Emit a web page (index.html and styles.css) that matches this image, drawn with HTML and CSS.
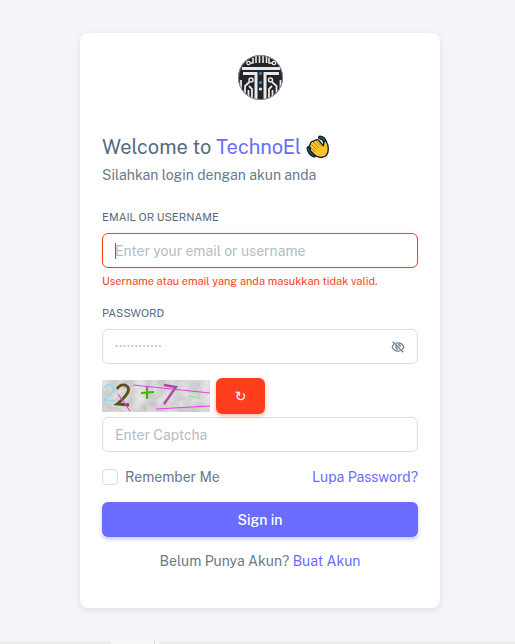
FILE: index.html
```html
<!DOCTYPE html>
<html lang="id">
<head>
<meta charset="utf-8">
<meta name="viewport" content="width=device-width, initial-scale=1">
<title>TechnoEl - Login</title>
<link rel="stylesheet" href="styles.css">
</head>
<body>
<main class="page">
  <section class="card">
    <svg class="logo" viewBox="0 0 45 45" aria-hidden="true">
      <defs><clipPath id="disc"><circle cx="22.5" cy="22.5" r="22.5"/></clipPath></defs>
      <g clip-path="url(#disc)" fill="none" stroke="#e8e9ea">
        <rect width="45" height="45" fill="#222428" stroke="none"/>
        <path stroke-width="1.6" d="M12 8h3V3M18 0v8M21.500 0v8M25 0v8M28.500 0v8M34 8h-3V3"/>
        <circle cx="10.500" cy="8" r="1.700" stroke-width="1.300"/><circle cx="36" cy="8" r="1.700" stroke-width="1.300"/>
        <path stroke-width="3" d="M4 13.500h38"/>
        <path stroke-width="3" d="M5 18.500h13V45M41 18.500H27V45"/>
        <circle cx="13" cy="25" r="2" stroke-width="1.500"/><circle cx="32.500" cy="25" r="2" stroke-width="1.500"/>
        <path stroke-width="1.800" d="M11.500 27L7 31v10M34 27l4.500 4v10M14 45V34l-3-3M31 45V34l3-3M3 25v10M42.500 25v10M10.500 45V35M34.500 45V35"/>
        <g stroke="none"><circle cx="22.500" cy="18.500" r="1.400" fill="#2a91d8"/><circle cx="22.500" cy="27.500" r="1.500" fill="#2a91d8"/><circle cx="22.500" cy="34" r="1.600" fill="#eee"/></g>
      </g>
      <circle cx="22.500" cy="22.500" r="22" fill="none" stroke="#84919d"/>
    </svg>

    <h1 class="title">
      <span>Welcome to <span class="brand">TechnoEl</span></span>
      <svg class="wave" viewBox="0 0 24 24" role="img" aria-label="wave">
        <g fill="none" stroke="#10191c" stroke-width="4" stroke-linecap="round">
          <path d="M14 2.500q4 .500 5 4.500M2.500 13q.500 5 5.500 7.500"/>
          <path d="M14 2.500q4 .500 5 4.500M2.500 13q.500 5 5.500 7.500" stroke="#1d6673" stroke-width="1.500"/>
        </g>
        <path d="M5 7.500q1-1.800 2.700-.800.300-2 2.300-1.500 1.500-1.500 3 .500l4.500 5 .300-3q.500-2 2.500-1.200 2 3 2 7.500 0 8-7.300 8.500-4 0-7-3l-3.500-3.500q-1-1.500.300-2.500l-1-1.500q-1-1.700.700-2.500Q3.800 8.500 5 7.500z" fill="#ffc331" stroke="#10191c" stroke-width="1.300" stroke-linejoin="round"/>
        <path d="M8 7.500l5 5.500M11 6.500l4.500 5M6 10l5 5M6 14l3 3" fill="none" stroke="#a76c12" stroke-width=".8"/>
      </svg>
    </h1>
    <p class="subtitle">Silahkan login dengan akun anda</p>

    <form class="form">
      <label class="label" for="email">Email or Username</label>
      <div class="field">
        <input class="input invalid" id="email" type="text" placeholder="Enter your email or username">
        <span class="caret"></span>
      </div>
      <p class="error">Username atau email yang anda masukkan tidak valid.</p>

      <label class="label" for="password">Password</label>
      <div class="input group">
        <input class="bare" id="password" type="password" placeholder="············">
        <button class="eye" type="button" aria-label="Show password">
          <svg viewBox="0 0 24 24" fill="none" stroke="currentColor" stroke-width="2">
            <path d="M3 3l18 18M8 5.500Q10 5 12 5q7 0 10 7-1 2.500-3 4.300M16 18.500Q14 19 12 19q-7 0-10-7 1-2.500 3-4.500M12 8q4 0 4 4M8.500 10.500Q7.500 15 12 16"/>
          </svg>
        </button>
      </div>

      <div class="captcha">
        <svg class="captcha-image" viewBox="0 0 108 32" role="img" aria-label="Captcha">
          <defs>
            <filter id="paper" x="0" y="0" width="100%" height="100%" color-interpolation-filters="sRGB">
              <feTurbulence type="fractalNoise" baseFrequency=".09" numOctaves="4" seed="4"/>
              <feColorMatrix values=".22 0 0 0 .73 .22 0 0 0 .73 .22 0 0 0 .73 0 0 0 0 1"/>
            </filter>
          </defs>
          <rect width="108" height="32" fill="#d6d6d6"/>
          <rect width="108" height="32" filter="url(#paper)"/>
          <g fill="none">
            <path d="M3 8q2-4 6-3 4 2 2 6-2 4-9 9l11 1" stroke="#a3d3e8" stroke-width="2"/>
            <path d="M15 9q3-5 8-4 5 2 3 7-3 6-11 12l12 1" stroke="#5d5218" stroke-width="2.800"/>
            <path d="M39 13l13-1M45 6v13" stroke="#45b414" stroke-width="2.200"/>
            <path d="M62 5l12 2-12 17" stroke="#ac46a8" stroke-width="2.300"/>
            <path d="M86 16l12 2M86 11l10 1" stroke="#a8e4b1" stroke-width="1.800"/>
            <path d="M31 5l77 8M54 29l54-3M16 14l12 17" stroke="#f538e8" stroke-width="1.200"/>
          </g>
        </svg>
        <button class="reload" type="button" aria-label="Reload captcha">↻</button>
      </div>
      <input class="input" type="text" placeholder="Enter Captcha" aria-label="Captcha">

      <div class="options">
        <label class="remember"><input class="check" type="checkbox">Remember Me</label>
        <a class="link" href="#">Lupa Password?</a>
      </div>
      <button class="submit" type="submit">Sign in</button>
    </form>
    <p class="signup">Belum Punya Akun? <a class="link" href="#">Buat Akun</a></p>
  </section>
</main>
<footer class="strip"><span class="strip-tab"></span></footer>
</body>
</html>
```
FILE: styles.css
```css
* {
  box-sizing: border-box;
}

body {
  display: flex;
  flex-direction: column;
  min-height: 100vh;
  margin: 0;
  background: #f4f4f9;
  color: #697a8d;
  font: 14px/20px "Public Sans", Inter, sans-serif;
}

p,
h1 {
  margin: 0;
}

input,
button {
  font: inherit;
}

.page {
  display: flex;
  flex: 1;
  align-items: center;
  justify-content: center;
  padding: 16px 16px 16px 21px;
}

.card {
  width: 100%;
  max-width: 360px;
  padding: 22px 22px 37px;
  border-radius: 8px;
  background: #fff;
  box-shadow: 0 2px 6px rgba(67, 89, 113, 0.12);
}

.logo {
  display: block;
  width: 45px;
  margin: 0 auto 34px;
}

.title {
  display: flex;
  align-items: center;
  gap: 5px;
  margin-bottom: 4px;
  color: #566a7f;
  font-size: 20px;
  font-weight: 400;
  line-height: 26px;
}

.brand,
.link {
  color: #696cff;
}

.link {
  text-decoration: none;
}

.wave {
  width: 24px;
  height: 24px;
}

.subtitle {
  line-height: 22px;
}

.form {
  margin-top: 21px;
}

.label {
  display: block;
  margin-bottom: 6px;
  color: #566a7f;
  font-size: 11px;
  font-weight: 400;
  text-transform: uppercase;
}

.field {
  position: relative;
}

.input {
  display: block;
  width: 100%;
  height: 35px;
  padding: 0 12px;
  border: 1px solid #d9dee3;
  border-radius: 6px;
  background: #fff;
  color: #697a8d;
  outline: 0;
}

::placeholder {
  color: #b4bdc6;
  opacity: 1;
}

.invalid {
  border-color: #ff3e1d;
  box-shadow: 0 0 4px rgba(255, 62, 29, 0.12);
}

.caret {
  position: absolute;
  top: 10px;
  left: 13px;
  width: 1px;
  height: 16px;
  background: #566a7f;
}

.error {
  margin: 3px 0 12px;
  color: #ff3e1d;
  font-size: 11px;
}

.group {
  display: flex;
  align-items: center;
}

.bare {
  flex: 1;
  min-width: 0;
  padding: 0;
  border: 0;
  outline: 0;
  background: none;
}

.eye {
  width: 14px;
  height: 14px;
  padding: 0;
  border: 0;
  background: none;
  color: #697a8d;
}

.eye svg {
  display: block;
}

.captcha {
  display: flex;
  align-items: center;
  gap: 6px;
  margin: 14px 0 3px;
}

.captcha-image {
  width: 108px;
  height: 32px;
}

.reload {
  width: 49px;
  height: 36px;
  padding: 0;
  border: 0;
  border-radius: 6px;
  background: #ff3e1d;
  box-shadow: 0 2px 4px rgba(255, 62, 29, 0.4);
  color: #fff;
  font-family: "DejaVu Sans", sans-serif;
}

.options {
  display: flex;
  align-items: center;
  justify-content: space-between;
  margin: 14px 0;
  line-height: 22px;
}

.remember {
  display: flex;
  align-items: center;
  gap: 7px;
}

.check {
  width: 16px;
  height: 16px;
  margin: 0;
  border: 1px solid #d9dee3;
  border-radius: 4px;
  appearance: none;
}

.check:checked {
  background: #696cff;
}

.submit {
  display: block;
  width: 100%;
  height: 35px;
  border: 0;
  border-radius: 6px;
  background: #696cff;
  box-shadow: 0 2px 4px rgba(105, 108, 255, 0.4);
  color: #fff;
  font-weight: 500;
}

.signup {
  margin-top: 14px;
  text-align: center;
}

.strip {
  height: 3px;
  padding-left: 111px;
  background: #ededed;
}

.strip-tab {
  display: block;
  width: 48px;
  height: 3px;
  border-right: 4px solid #f8f8f8;
  background: linear-gradient(to left, #d0d0d0 1px, #f8f8f8 1px);
}
```
